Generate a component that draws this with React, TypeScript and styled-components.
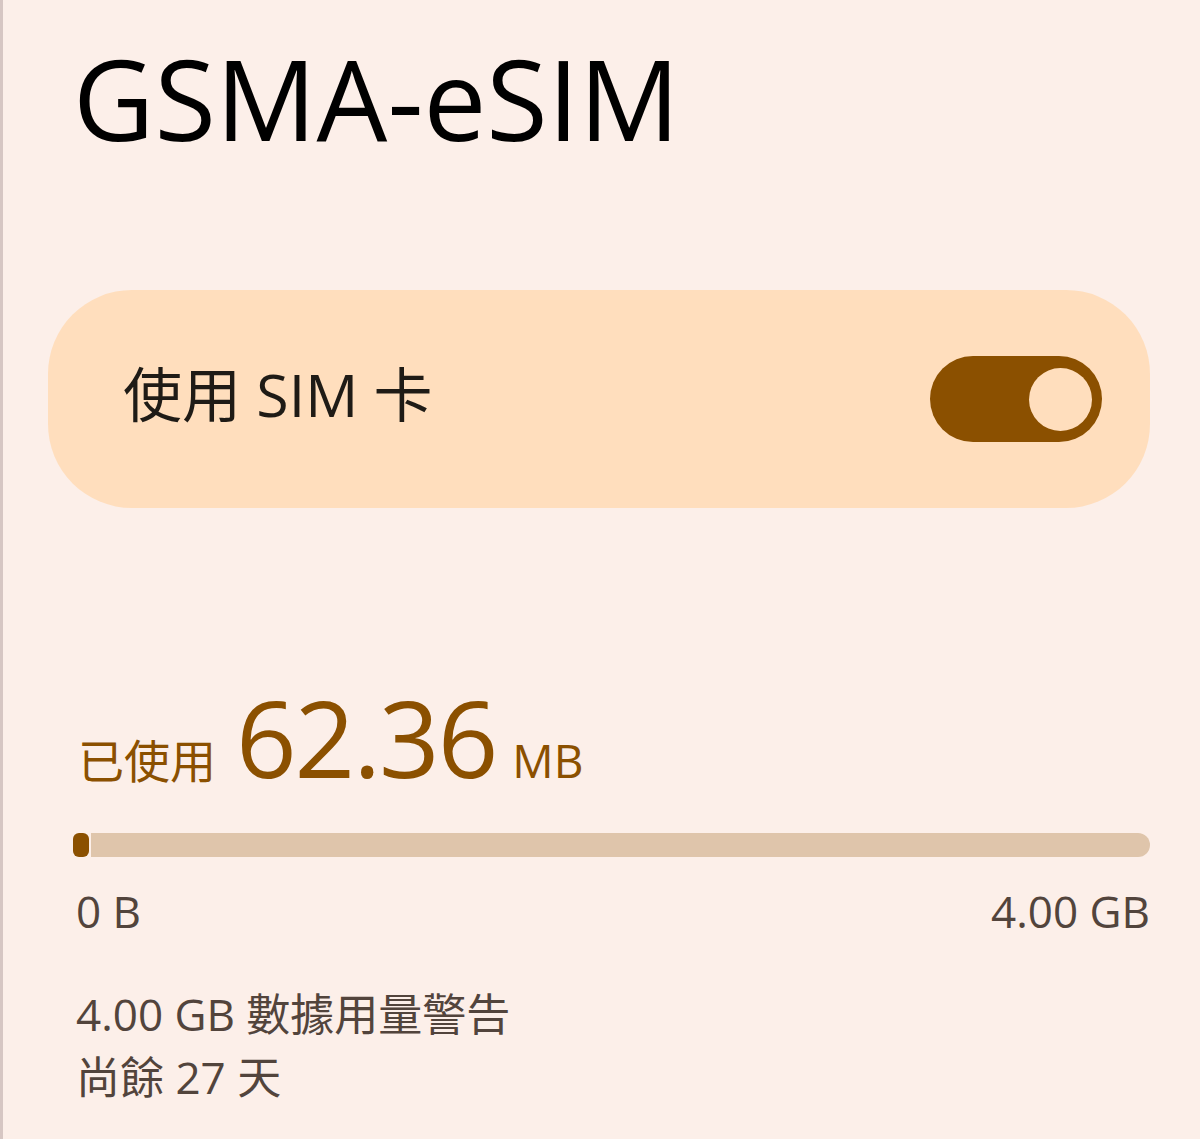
import React from "react";
import styled, { createGlobalStyle } from "styled-components";

const Global = createGlobalStyle`
  html, body { margin: 0; padding: 0; background: #fcefe9; }
  body { font-family: "Open Sans", "Noto Sans CJK TC", sans-serif; }
`;

const Page = styled.div`
  box-sizing: border-box;
  width: 1200px;
  min-height: 1139px;
  background: #fcefe9;
  border-left: 3px solid #d6c6c3;
  padding: 0 50px 0 45px;
  display: flex;
  flex-direction: column;
  overflow: hidden;
`;

const Title = styled.h1`
  margin: 33px 0 0 25px;
  font-family: "Open Sans", sans-serif;
  font-weight: 400;
  font-size: 112px;
  line-height: 130px;
  color: #000;
  letter-spacing: 0;
`;

const Card = styled.div`
  margin-top: 127px;
  height: 218px;
  border-radius: 84px;
  background: #ffdebd;
  display: flex;
  align-items: center;
  justify-content: space-between;
  padding: 0 48px 0 75px;
  box-sizing: border-box;
`;

const CardLabel = styled.span`
  font-family: "Open Sans", "Noto Sans CJK TC", sans-serif;
  font-size: 59px;
  line-height: 80px;
  color: #1f1b16;
  padding-bottom: 10px;
`;

const Switch = styled.div<{ on: boolean }>`
  width: 172px;
  height: 86px;
  border-radius: 43px;
  background: ${(p) => (p.on ? "#8b5000" : "#e0c9b0")};
  display: flex;
  align-items: center;
  justify-content: ${(p) => (p.on ? "flex-end" : "flex-start")};
  padding: 0 10px;
  box-sizing: border-box;
`;

const Thumb = styled.div`
  width: 63px;
  height: 63px;
  border-radius: 50%;
  background: #ffdebd;
`;

const Usage = styled.div`
  margin-top: 169px;
  padding-left: 30px;
  display: flex;
  align-items: baseline;
  color: #8b5000;
`;

const UsageLabel = styled.span`
  font-family: "Noto Sans CJK TC", sans-serif;
  font-size: 46px;
  margin-right: 20px;
`;

const UsageValue = styled.span`
  font-family: "Open Sans", sans-serif;
  font-size: 106px;
  font-weight: 500;
  letter-spacing: -2px;
  line-height: 120px;
  margin-right: 16px;
`;

const UsageUnit = styled.span`
  font-family: "Open Sans", sans-serif;
  font-size: 46px;
`;

const Bar = styled.div`
  margin: 36px 0 0 25px;
  height: 24px;
  display: flex;
  gap: 2px;
`;

const Fill = styled.div`
  height: 100%;
  border-radius: 6px;
  background: #8b5000;
`;

const Track = styled.div`
  flex: 1;
  height: 100%;
  background: #dfc5ab;
  border-radius: 0 12px 12px 0;
`;

const Scale = styled.div`
  margin: 24px 0 0 28px;
  display: flex;
  justify-content: space-between;
  font-family: "Open Sans", sans-serif;
  font-size: 44px;
  line-height: 60px;
  color: #52443c;
`;

const Notes = styled.div`
  margin: 42px 0 0 28px;
  display: flex;
  flex-direction: column;
  font-family: "Open Sans", "Noto Sans CJK TC", sans-serif;
  font-size: 44px;
  line-height: 63px;
  color: #52443c;
`;

export default function App() {
  const used = 62.36;
  const total = 4096;
  const pct = Math.max(1.2, (used / total) * 100);
  return (
    <>
      <Global />
      <Page>
        <Title>GSMA-eSIM</Title>
        <Card>
          <CardLabel>使用 SIM 卡</CardLabel>
          <Switch on>
            <Thumb />
          </Switch>
        </Card>
        <Usage>
          <UsageLabel>已使用</UsageLabel>
          <UsageValue>62.36</UsageValue>
          <UsageUnit>MB</UsageUnit>
        </Usage>
        <Bar>
          <Fill style={{ width: `${pct}%` }} />
          <Track />
        </Bar>
        <Scale>
          <span>0 B</span>
          <span>4.00 GB</span>
        </Scale>
        <Notes>
          <span>4.00 GB 數據用量警告</span>
          <span>尚餘 27 天</span>
        </Notes>
      </Page>
    </>
  );
}
